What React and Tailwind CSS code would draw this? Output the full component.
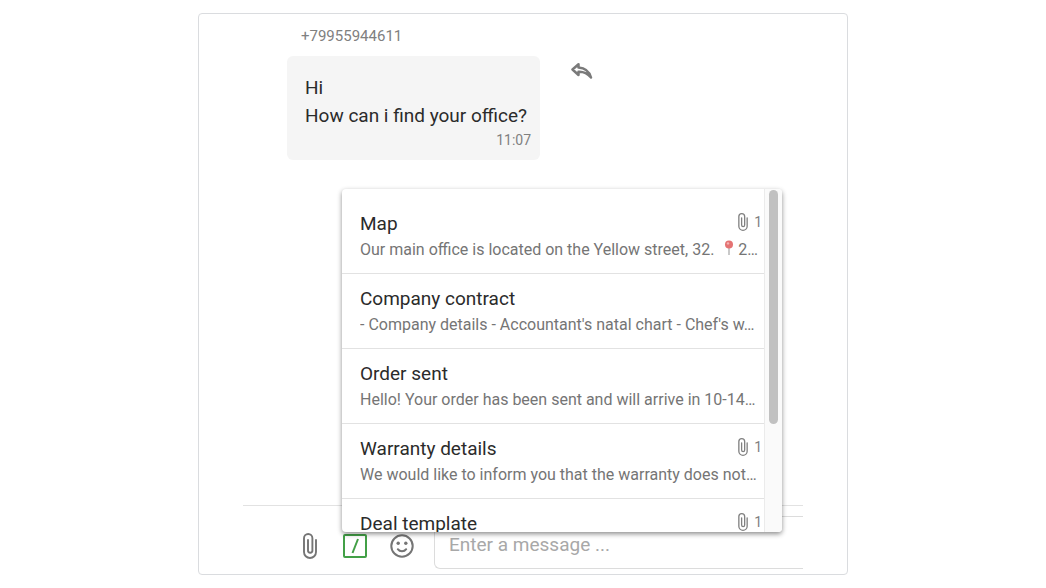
import { useState } from 'react'

const TEMPLATES = [
  { title: 'Map', text: 'Our main office is located on the Yellow street, 32.', pin: '2…', files: 1 },
  { title: 'Company contract', text: "- Company details - Accountant's natal chart - Chef's w…" },
  { title: 'Order sent', text: 'Hello! Your order has been sent and will arrive in 10-14…' },
  { title: 'Warranty details', text: 'We would like to inform you that the warranty does not…', files: 1 },
  { title: 'Deal template', text: '', files: 1 },
]

function ClipIcon({ className }) {
  return (
    <svg viewBox="0 0 14 26" fill="none" stroke="currentColor" strokeWidth="1.9" strokeLinecap="round" className={className}>
      <path d="M13 7V19A6 6 0 0 1 1 19V5.200A4.200 4.200 0 0 1 9.400 5.200V17.500A2.200 2.200 0 0 1 5 17.500V7" />
    </svg>
  )
}

function ReplyIcon() {
  return (
    <svg viewBox="0 0 22 18" fill="none" stroke="currentColor" strokeWidth="2.5" strokeLinejoin="round" className="w-[22px] h-[18px]">
      <path d="M7.500 2.200L1.500 7.500L7.500 13V9.800C12.500 9.500 16.500 11.500 20 15.500C18.500 10.200 14 6 7.500 5.500Z" />
    </svg>
  )
}

function SmileIcon() {
  return (
    <svg viewBox="0 0 24 24" fill="none" stroke="currentColor" strokeWidth="2" className="w-6 h-6">
      <circle cx="12" cy="12" r="10.700" />
      <circle cx="8.200" cy="9.200" r="1.700" fill="currentColor" stroke="none" />
      <circle cx="15.800" cy="9.200" r="1.700" fill="currentColor" stroke="none" />
      <path d="M7.800 15.200C9.800 18 14.200 18 16.200 15.200" strokeLinecap="round" />
    </svg>
  )
}

function PinIcon() {
  return (
    <svg viewBox="0 0 10 16" className="inline-block w-[10px] h-4 ml-[6px] mr-1 align-[-1px]">
      <path d="M5 7V15" stroke="#a5a5a5" strokeWidth="1.2" />
      <circle cx="5" cy="4.500" r="4" fill="#e57373" />
      <circle cx="4" cy="3.400" r="1.200" fill="#f5b5b5" />
    </svg>
  )
}

function Message() {
  return (
    <div className="pl-11">
      <p className="pl-[14px] text-[15px] leading-6 text-[#808080]">+79955944611</p>
      <div className="flex items-start gap-[31px] mt-2">
        <div className="pt-[18px] pb-[10px] pl-[18px] pr-[9px] rounded-md bg-[#f5f5f5]">
          <p className="pr-1 text-[19px] leading-7 text-[#2b2b2b]">
            Hi
            <br />
            How can i find your office?
          </p>
          <p className="text-sm text-right text-[#808080]">11:07</p>
        </div>
        <button type="button" aria-label="Reply" className="mt-[6px] text-[#7a7a7a]">
          <ReplyIcon />
        </button>
      </div>
    </div>
  )
}

function TemplateItem({ item }) {
  return (
    <li className="border-b border-[#e2e2e2]">
      <button type="button" className="block w-full pt-3 pb-[10px] pl-[18px] pr-[2px] text-left whitespace-nowrap">
        <span className="flex items-center justify-between">
          <span className="text-[19px] leading-[26px] text-[#2b2b2b]">{item.title}</span>
          {item.files && (
            <span className="flex items-center gap-[6px] pb-1 text-sm text-[#808080]">
              <ClipIcon className="w-[10px] h-[18px]" />
              {item.files}
            </span>
          )}
        </span>
        <span className="block overflow-hidden text-base leading-[26px] text-[#757575]">
          {item.text}
          {item.pin && (
            <>
              {' '}
              <PinIcon />
              {item.pin}
            </>
          )}
        </span>
      </button>
    </li>
  )
}

function TemplateMenu() {
  return (
    <div className="absolute left-[99px] right-[21px] bottom-[42px] flex h-[343px] rounded-sm overflow-hidden bg-white shadow-[0_2px_5px_rgba(0,0,0,0.45)]">
      <ul className="flex-1 min-w-0 pt-[10px] overflow-hidden">
        {TEMPLATES.map((item) => (
          <TemplateItem key={item.title} item={item} />
        ))}
      </ul>
      <div className="w-[18px] pt-px border-l border-[#ebebeb] bg-[#fafafa]">
        <div className="w-[9px] h-[234px] mx-auto rounded-full bg-[#c1c1c1]" />
      </div>
    </div>
  )
}

function Composer() {
  const [text, setText] = useState('')

  return (
    <div className="relative flex items-start pt-[10px] pb-[5px] border-t border-[#e2e2e2]">
      <div className="flex items-center h-[53px] pt-[6px] pl-[57px] gap-[23px] text-[#757575]">
        <button type="button" aria-label="Attach a file" className="flex justify-center w-5">
          <ClipIcon className="w-4 h-[26px]" />
        </button>
        <button
          type="button"
          aria-label="Templates"
          className="flex items-center justify-center w-6 h-6 border-2 rounded-xs border-[#43a047] text-[#43a047]"
        >
          <svg viewBox="0 0 10 16" className="w-[10px] h-4" fill="none" stroke="currentColor" strokeWidth="2">
            <path d="M8 1L2.500 15" />
          </svg>
        </button>
        <button type="button" aria-label="Emoji">
          <SmileIcon />
        </button>
      </div>
      <input
        aria-label="Message"
        placeholder="Enter a message ..."
        value={text}
        onChange={(e) => setText(e.target.value)}
        className="flex-1 min-w-0 h-[53px] ml-5 pl-[14px] pt-1 text-[19px] border border-r-0 rounded-l-md border-[#dcdcdc] outline-none placeholder:text-[#a8a8a8]"
      />
      <TemplateMenu />
    </div>
  )
}

export default function App() {
  return (
    <main className="min-h-screen px-4 py-[13px] bg-white font-[Roboto,sans-serif]">
      <section className="flex flex-col justify-between max-w-[650px] min-h-[562px] mx-auto px-11 pt-[10px] border rounded-sm border-[#dadcdf]">
        <Message />
        <Composer />
      </section>
    </main>
  )
}
